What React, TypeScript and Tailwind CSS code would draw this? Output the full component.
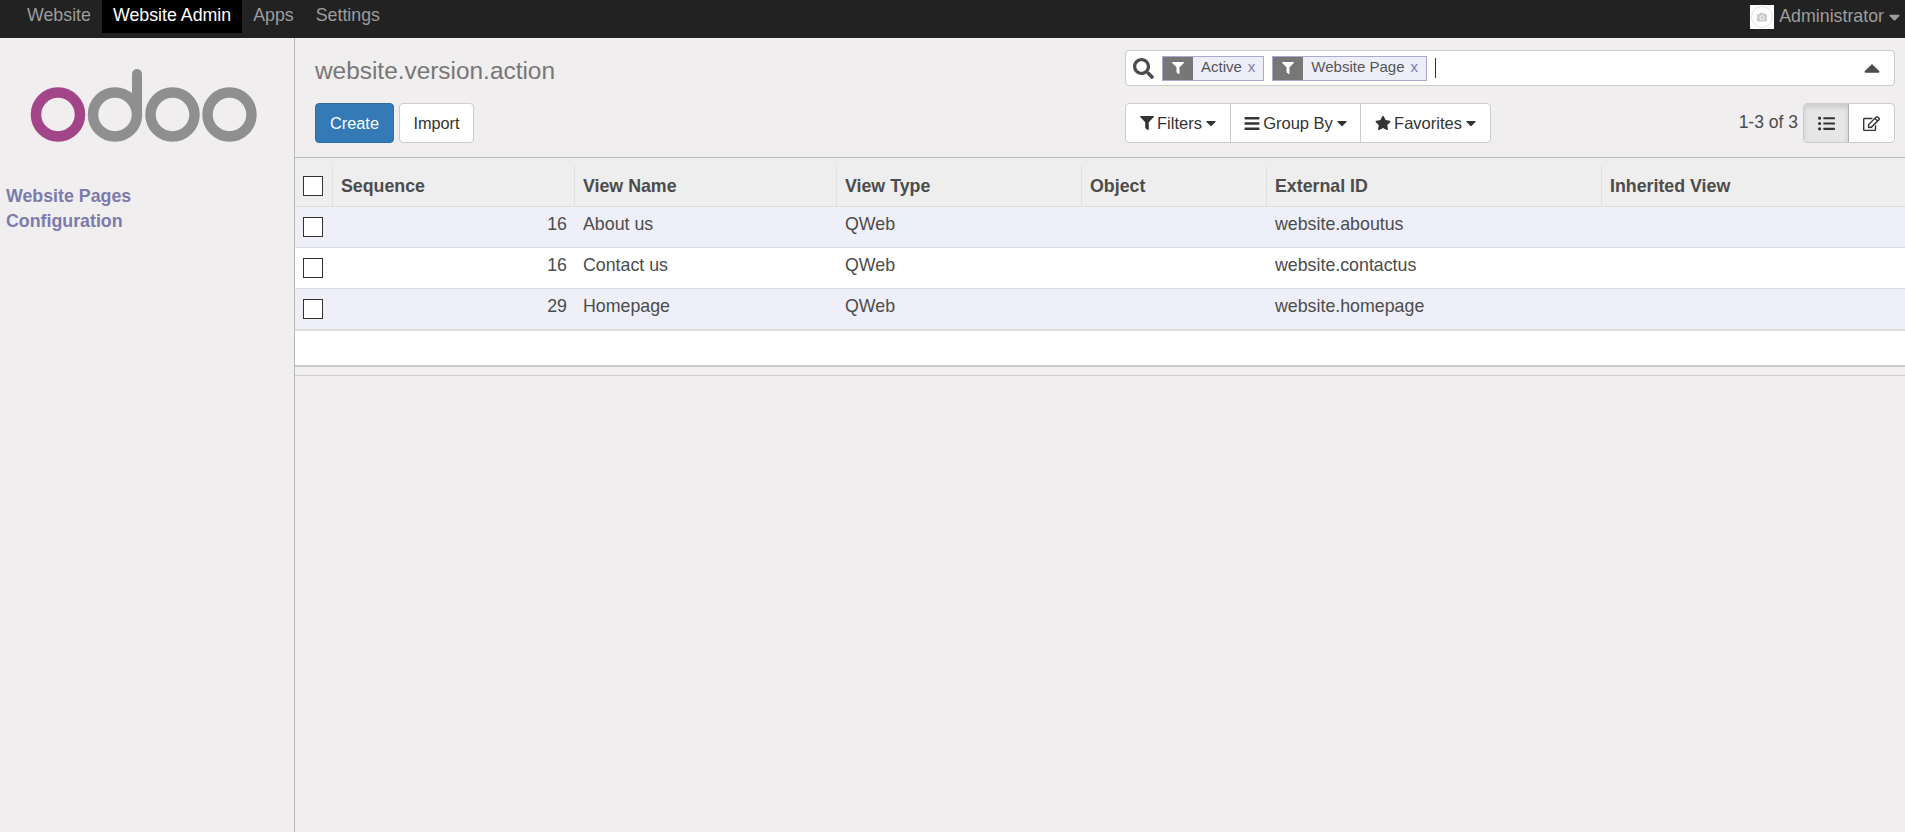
import { FaCaretDown, FaCaretUp, FaCamera, FaFilter, FaBars, FaListUl, FaRegEdit, FaSearch, FaStar } from "react-icons/fa";

const columns = [
  { name: "Sequence", width: "w-[242px]" },
  { name: "View Name", width: "w-[262px]" },
  { name: "View Type", width: "w-[245px]" },
  { name: "Object", width: "w-[185px]" },
  { name: "External ID", width: "w-[335px]" },
  { name: "Inherited View", width: "w-[304px]" },
];

const rows = [
  { sequence: 16, name: "About us", type: "QWeb", externalId: "website.aboutus" },
  { sequence: 16, name: "Contact us", type: "QWeb", externalId: "website.contactus" },
  { sequence: 29, name: "Homepage", type: "QWeb", externalId: "website.homepage" },
];

function Checkbox() {
  return <span className="block h-5 w-5 border border-[#333] bg-white" />;
}

function Facet({ label }: { label: string }) {
  return (
    <div className="flex h-[25px] items-stretch border border-[#aaaacc] bg-[#eeeef8] text-[15px] leading-[20px] text-[#555]">
      <span className="flex w-[30px] items-center justify-center bg-[#777] text-white">
        <FaFilter className="h-[12px] w-[12px]" />
      </span>
      <span className="flex items-center pb-[2px] pl-[8px] pr-[8px]">
        {label}
        <span className="ml-[6px] text-[#7c7bad]">x</span>
      </span>
    </div>
  );
}

function OdooLogo() {
  return (
    <svg width="260" height="90" viewBox="0 0 260 90" className="block">
      <g fill="none" strokeWidth="10.5">
        <circle cx="115" cy="54.5" r="22" stroke="#8f8f8f" />
        <path d="M137 54.5V14" stroke="#8f8f8f" strokeWidth="10" strokeLinecap="round" />
        <circle cx="172.5" cy="54.5" r="22" stroke="#8f8f8f" />
        <circle cx="229.5" cy="54.5" r="22" stroke="#8f8f8f" />
        <circle cx="58" cy="54.5" r="22" stroke="#a24689" />
      </g>
    </svg>
  );
}

export default function App() {
  return (
    <div className="flex h-[832px] flex-col overflow-hidden bg-[#f0eeee] font-['Liberation_Sans',Arial,sans-serif] text-[17.8px] text-[#4c4c4c]">
      <nav className="flex h-[38px] shrink-0 items-start justify-between bg-[#222] pl-[16px] pr-[5px] text-[#9d9d9d]">
        <div className="flex">
          <a className="flex h-[33px] items-center px-[11px] pb-[3px]">Website</a>
          <a className="flex h-[33px] items-center bg-black px-[11px] pb-[3px] text-white">Website Admin</a>
          <a className="flex h-[33px] items-center px-[11px] pb-[3px]">Apps</a>
          <a className="flex h-[33px] items-center px-[11px] pb-[3px]">Settings</a>
        </div>
        <div className="flex h-[33px] items-center">
          <span className="flex h-6 w-6 items-center justify-center bg-white text-[#ccc]">
            <span className="flex h-[22px] w-[22px] items-center justify-center rounded-full border border-[#e2e2e2]">
              <FaCamera className="h-[10px] w-[10px]" />
            </span>
          </span>
          <span className="ml-[5px]">Administrator</span>
          <FaCaretDown className="ml-[5px] h-[18px] w-[11px]" />
        </div>
      </nav>

      <div className="flex min-h-0 flex-1">
        <aside className="w-[295px] shrink-0 border-r border-[#b8b8b8]">
          <div className="pt-[22px]">
            <OdooLogo />
          </div>
          <ul className="mt-[34px] pl-[6px] font-bold leading-[25px] text-[#7c7bad]">
            <li>Website Pages</li>
            <li>Configuration</li>
          </ul>
        </aside>

        <main className="min-w-0 flex-1">
          <div className="flex h-[120px] border-b border-[#bbb]">
            <div className="w-[830px] shrink-0 pl-[20px] pt-[16px]">
              <h1 className="text-[24.4px] leading-[34px] text-[#777]">website.version.action</h1>
              <div className="mt-[15px] flex gap-[5px]">
                <button className="h-[40px] w-[79px] rounded-[4px] border border-[#2e6da4] bg-[#337ab7] text-[16.3px] text-white">Create</button>
                <button className="h-[40px] w-[75px] rounded-[4px] border border-[#ccc] bg-white text-[16.3px] text-[#333]">Import</button>
              </div>
            </div>
            <div className="flex-1 pr-[10px] pt-[12px]">
              <div className="flex h-[36px] items-center rounded-[4px] border border-[#ccc] bg-white pl-[7px] pr-[14px]">
                <FaSearch className="h-[21px] w-[21px] text-[#4c4c4c]" />
                <div className="ml-[8px] flex gap-[8px]">
                  <Facet label="Active" />
                  <Facet label="Website Page" />
                </div>
                <span className="ml-[8px] h-[20px] w-px bg-[#333]" />
                <FaCaretUp className="ml-auto h-[26px] w-[16px] text-[#4c4c4c]" />
              </div>

              <div className="mt-[17px] flex items-center justify-between">
                <div className="flex h-[40px] rounded-[4px] border border-[#ccc] bg-white text-[16.5px] text-[#333]">
                  <button className="flex w-[105px] items-center justify-center gap-[3px] border-r border-[#ccc]">
                    <FaFilter className="h-[14px] w-[14px]" /> Filters <FaCaretDown className="ml-[1px] h-[16px] w-[10px]" />
                  </button>
                  <button className="flex w-[130px] items-center justify-center gap-[3px] border-r border-[#ccc]">
                    <FaBars className="h-[17px] w-[16px]" /> Group By <FaCaretDown className="ml-[1px] h-[16px] w-[10px]" />
                  </button>
                  <button className="flex w-[129px] items-center justify-center gap-[3px]">
                    <FaStar className="h-[16px] w-[16px]" /> Favorites <FaCaretDown className="ml-[1px] h-[16px] w-[10px]" />
                  </button>
                </div>
                <div className="flex items-center">
                  <span className="mr-[5px] pb-[1px] text-[17.5px]">1-3 of 3</span>
                  <div className="flex h-[40px] rounded-[4px] border border-[#ccc] bg-white text-[#333]">
                    <button className="flex w-[45px] items-center justify-center rounded-l-[4px] border-r border-[#adadad] bg-[#e6e6e6] shadow-[inset_0_3px_5px_rgba(0,0,0,0.125)]">
                      <FaListUl className="h-[17px] w-[17px]" />
                    </button>
                    <button className="flex w-[45px] items-center justify-center">
                      <FaRegEdit className="h-[17px] w-[17px]" />
                    </button>
                  </div>
                </div>
              </div>
            </div>
          </div>

          <table className="w-full table-fixed border-collapse">
            <thead>
              <tr className="h-[48px] bg-[#eee] text-left">
                <th className="w-[37px] p-0 align-middle">
                  <div className="pl-[8px] pt-[8px]"><Checkbox /></div>
                </th>
                {columns.map((col) => (
                  <th key={col.name} className={`${col.width} p-0 align-bottom font-bold`}>
                    <div className="flex h-[40px] items-start border-l border-[#e0e0e0] pl-[8px] pt-[8px] leading-[24px]">{col.name}</div>
                  </th>
                ))}
              </tr>
            </thead>
            <tbody>
              {rows.map((row, i) => (
                <tr key={row.name} className={`h-[41px] border-t border-[#ddd] ${i % 2 === 0 ? "bg-[#eeeff8]" : "bg-white"}`}>
                  <td className="p-0">
                    <div className="pl-[8px] pt-[1px]"><Checkbox /></div>
                  </td>
                  <td className="p-0 pb-[4px] pr-[7px] text-right">{row.sequence}</td>
                  <td className="p-0 pb-[4px] pl-[9px]">{row.name}</td>
                  <td className="p-0 pb-[4px] pl-[9px]">{row.type}</td>
                  <td className="p-0"></td>
                  <td className="p-0 pb-[4px] pl-[9px]">{row.externalId}</td>
                  <td className="p-0"></td>
                </tr>
              ))}
            </tbody>
          </table>
          <div className="h-[38px] border-t-2 border-b-2 border-t-[#ddd] border-b-[#ccc] bg-white" />
          <div className="h-[9px] border-b border-[#ccc]" />
        </main>
      </div>
    </div>
  );
}
